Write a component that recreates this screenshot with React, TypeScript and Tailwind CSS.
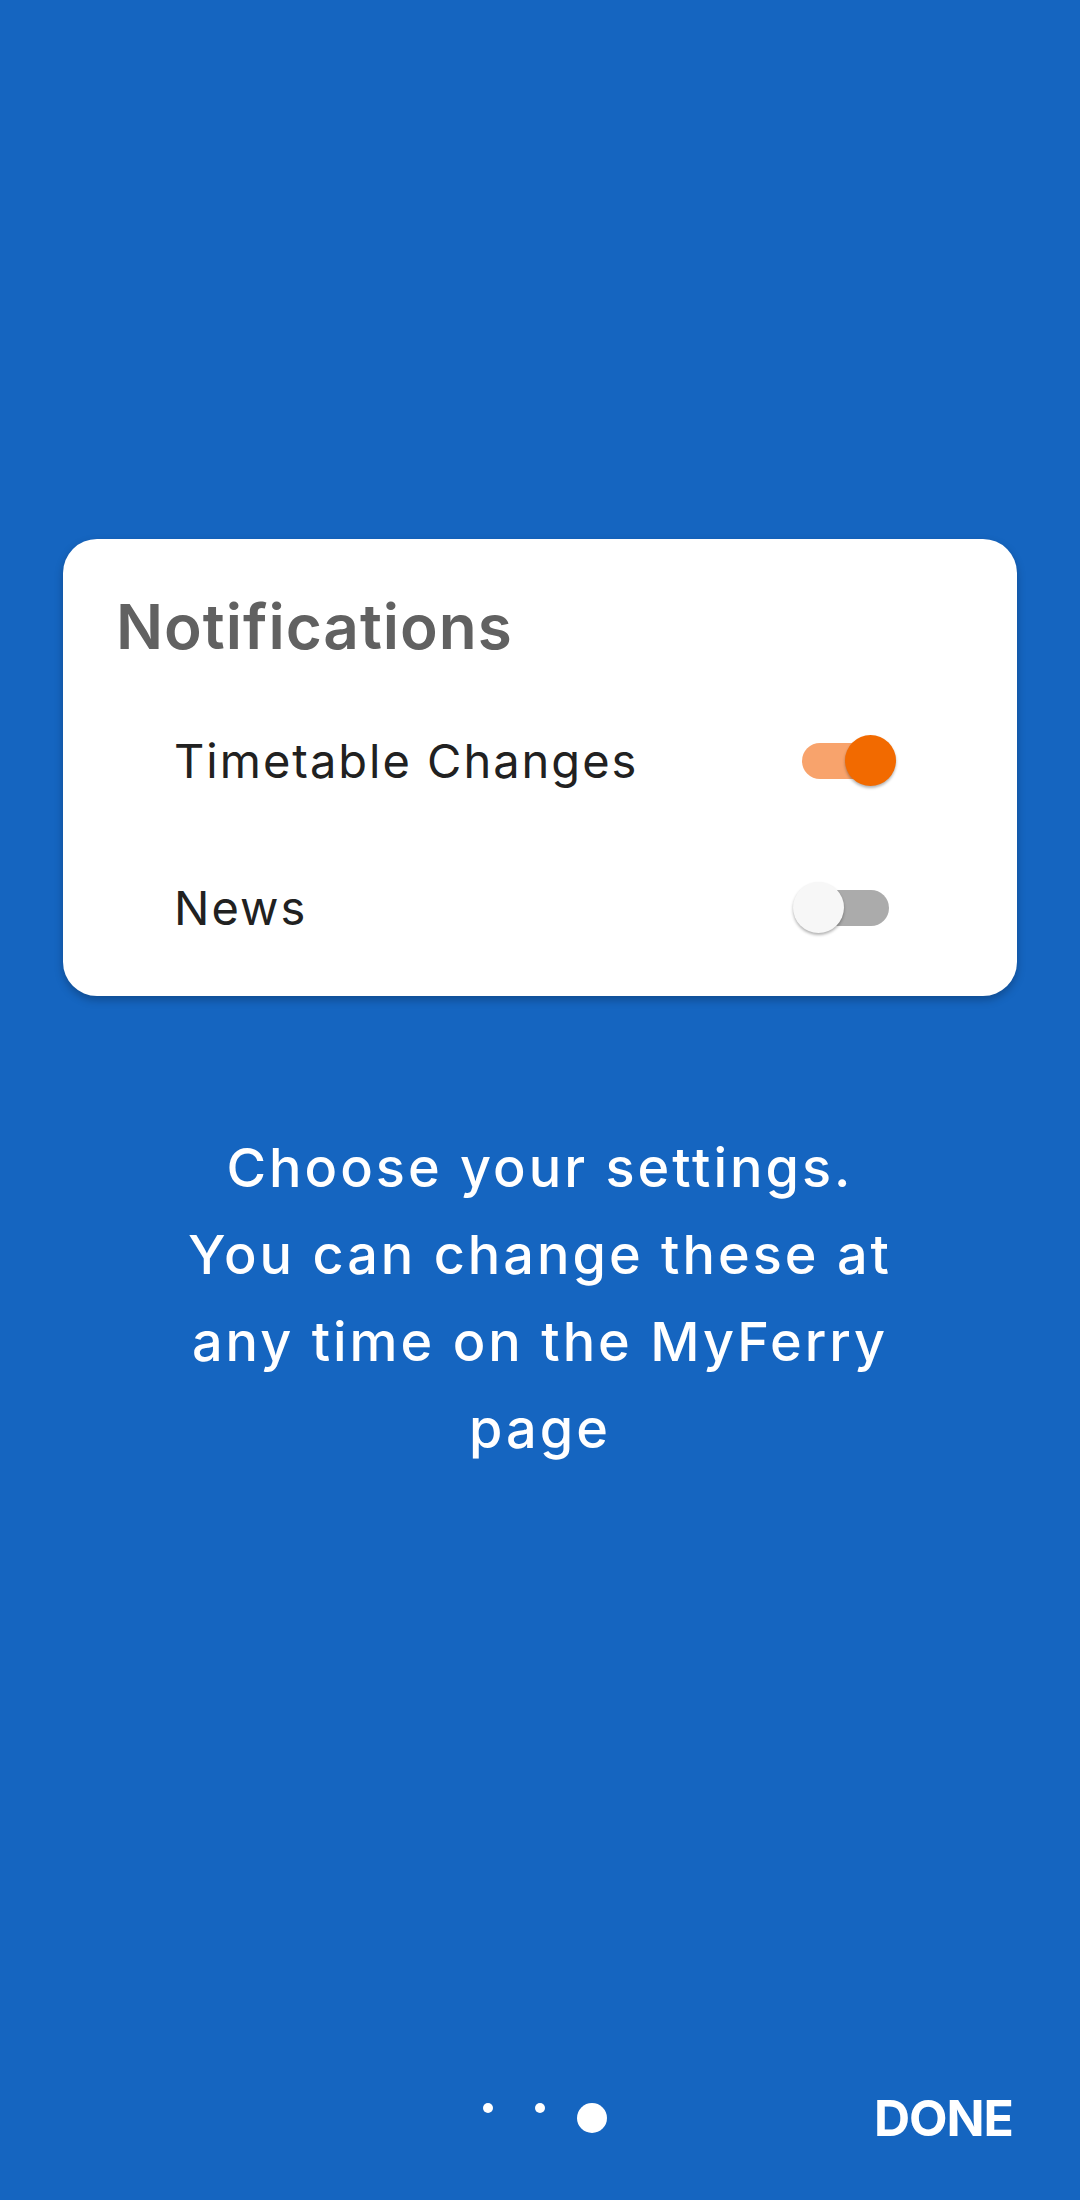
import React, { useState } from "react";

const font = { fontFamily: "Inter, 'Noto Sans', sans-serif" };

interface ToggleProps {
  on: boolean;
  onChange: () => void;
}

const Toggle: React.FC<ToggleProps> = ({ on, onChange }) => (
  <button
    onClick={onChange}
    className={`relative w-[87px] h-[36px] rounded-full ${
      on ? "bg-[#f8a36c]" : "bg-[#ababab]"
    }`}
  >
    <span
      className={`absolute top-[-8px] w-[51px] h-[51px] rounded-full shadow-[0_2px_3px_rgba(0,0,0,0.3)] ${
        on ? "right-[-7px] bg-[#f26a00]" : "left-[-9px] bg-[#f7f7f7]"
      }`}
    />
  </button>
);

export default function App() {
  const [timetable, setTimetable] = useState(true);
  const [news, setNews] = useState(false);

  const rows = [
    { label: "Timetable Changes", on: timetable, toggle: () => setTimetable(!timetable) },
    { label: "News", on: news, toggle: () => setNews(!news) },
  ];

  return (
    <div className="w-[1080px] h-[2200px] bg-[#1565c0] flex flex-col" style={font}>
      {/* Card */}
      <div className="mt-[539px] mx-[63px] bg-white rounded-[34px] shadow-[0_4px_8px_rgba(0,0,0,0.25)] pt-[52px] pb-[38px]">
        <h1 className="pl-[53px] h-[72px] leading-[72px] text-[62px] font-semibold text-[#616161] tracking-[1px]">
          Notifications
        </h1>
        <div className="mt-[48px] flex flex-col gap-[47px]">
          {rows.map((r) => (
            <div key={r.label} className="h-[100px] flex items-center pl-[111px] pr-[128px]">
              <span className="flex-1 text-[47px] text-[#212121] tracking-[2px]">{r.label}</span>
              <Toggle on={r.on} onChange={r.toggle} />
            </div>
          ))}
        </div>
      </div>

      {/* Body text */}
      <p className="mt-[128px] text-center text-white text-[54px] font-medium leading-[87px] tracking-[3px]">
        Choose your settings.
        <br />
        You can change these at
        <br />
        any time on the MyFerry
        <br />
        page
      </p>

      {/* Bottom bar */}
      <div className="mt-auto mb-[32px] h-[100px] grid grid-cols-[1fr_auto_1fr] items-center">
        <div />
        <div className="flex">
          <div className="w-[52px] flex justify-center">
            <span className="w-[10px] h-[10px] rounded-full bg-white" />
          </div>
          <div className="w-[52px] flex justify-center">
            <span className="w-[10px] h-[10px] rounded-full bg-white" />
          </div>
          <div className="w-[52px] flex justify-center">
            <span className="w-[30px] h-[30px] rounded-full bg-white" />
          </div>
        </div>
        <div className="flex justify-end pr-[67px]">
          <button className="text-white text-[50px] font-bold tracking-[-1px]">DONE</button>
        </div>
      </div>
    </div>
  );
}
